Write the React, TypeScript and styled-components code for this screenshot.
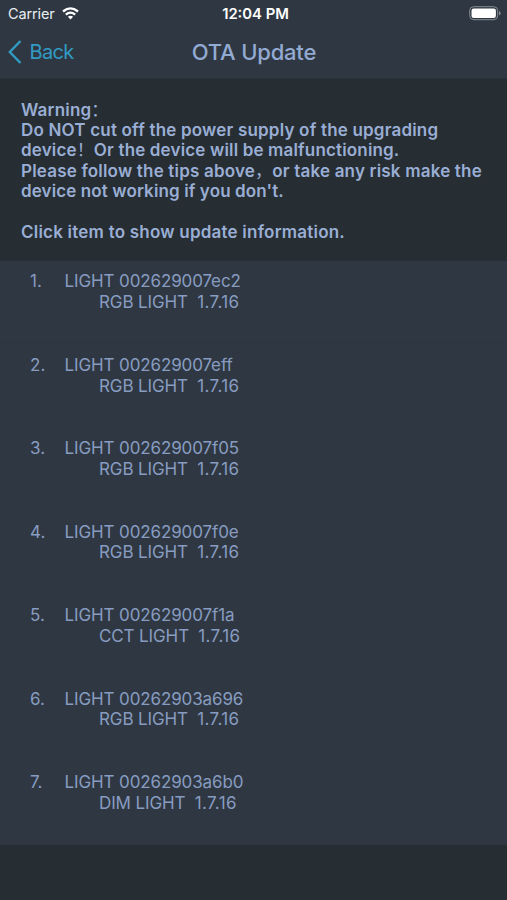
import React from 'react';
import styled, { createGlobalStyle } from 'styled-components';

const Global = createGlobalStyle`
  * { box-sizing: border-box; }
  body { margin: 0; background: #262d33; font-family: Inter, "Noto Sans CJK SC", sans-serif; }
`;

const Screen = styled.main`
  display: flex;
  flex-direction: column;
  width: 507px;
  height: 900px;
  overflow: hidden;
  background: #262d33;
  color: #9aaed4;
`;

const Header = styled.header`
  height: 79px;
  background: #2f3842;
  border-bottom: 1px solid #29313a;
`;

const StatusBar = styled.div`
  display: grid;
  grid-template-columns: 1fr auto 1fr;
  align-items: center;
  height: 27px;
  padding: 0 6px 0 8px;
  color: #fff;
  font-size: 15px;
`;

const Carrier = styled.div`
  display: flex;
  align-items: center;
  gap: 7px;
  color: #e9edf2;
  font-size: 14.5px;
  letter-spacing: -0.12px;
`;

const Clock = styled.div`
  padding: 1px 0 0 2px;
  font-size: 14.8px;
  font-weight: 600;
`;

const Battery = styled.svg`
  justify-self: end;
`;

const NavBar = styled.nav`
  display: grid;
  grid-template-columns: 1fr auto 1fr;
  align-items: center;
  height: 50px;
  padding: 0 8px;
`;

const BackButton = styled.a`
  display: flex;
  align-items: center;
  gap: 7.5px;
  color: #319bc4;
  font-size: 20px;
  letter-spacing: -0.65px;
`;

const Title = styled.h1`
  margin: 0;
  padding-left: 1px;
  color: #93aad2;
  font-size: 22px;
  font-weight: 500;
  letter-spacing: -0.2px;
`;

const Warning = styled.section`
  height: 182px;
  padding: 20.5px 21px 0;
  font-size: 17px;
  font-weight: 600;
  line-height: 20.4px;
`;

const Line = styled.div<{ $spacing?: number }>`
  height: 20.4px;
  white-space: pre;
  letter-spacing: ${p => p.$spacing ?? 0.19}px;
`;

const Mark = styled.span`
  font-weight: 400;
`;

const List = styled.ol`
  margin: 0;
  padding: 0;
  list-style: none;
`;

const Item = styled.li`
  display: grid;
  grid-template-columns: 34.5px 1fr;
  height: 83.45px;
  padding: 10.4px 0 0 30px;
  background: #2f3842;
  border-bottom: 1px solid #2d3640;
  color: #889cc1;
  font-size: 17px;
  line-height: 20.7px;
`;

const Details = styled.div`
  white-space: pre;
  letter-spacing: -0.12px;
`;

const Model = styled.div`
  padding-left: 34.5px;
`;

const Version = styled.span`
  letter-spacing: 0.36px;
`;

const devices = [
  ['002629007ec2', 'RGB'], ['002629007eff', 'RGB'], ['002629007f05', 'RGB'],
  ['002629007f0e', 'RGB'], ['002629007f1a', 'CCT'], ['00262903a696', 'RGB'],
  ['00262903a6b0', 'DIM'],
];

export default function App() {
  return (
    <Screen>
      <Global />
      <Header>
        <StatusBar>
          <Carrier>
            Carrier
            <svg width="17" height="13" viewBox="0 0 17 13" fill="none" stroke="#fff" strokeWidth="2.3">
              <path d="M1 4.5Q8.5-1.8 16 4.5M3.8 7.6Q8.5 3.6 13.2 7.6" />
              <path d="M5.9 9.7Q8.5 7.7 11.1 9.7L8.5 12.4Z" fill="#fff" stroke="none" />
            </svg>
          </Carrier>
          <Clock>12:04 PM</Clock>
          <Battery width="32" height="15" viewBox="0 0 32 15">
            <rect x=".7" y=".7" width="28" height="13" rx="4" fill="none" stroke="#878c93" />
            <rect x="2.5" y="2.5" width="24.4" height="9.4" rx="2.2" fill="#fff" />
            <path d="M30 5v4.5Q31.6 8.8 31.6 7.2T30 5" fill="#878c93" />
          </Battery>
        </StatusBar>
        <NavBar>
          <BackButton>
            <svg width="14" height="24" viewBox="0 0 14 24" fill="none" stroke="currentColor" strokeWidth="2.4">
              <path d="M12.5 1L1.8 12L12.5 23" />
            </svg>
            Back
          </BackButton>
          <Title>OTA Update</Title>
        </NavBar>
      </Header>
      <Warning>
        <Line>Warning<Mark>：</Mark></Line>
        <Line>Do NOT cut off the power supply of the upgrading</Line>
        <Line $spacing={0.16}>device<Mark>！</Mark>Or the device will be malfunctioning.</Line>
        <Line>Please follow the tips above<Mark>，</Mark>or take any risk make the</Line>
        <Line $spacing={0.12}>device not working if you don't.</Line>
        <Line />
        <Line $spacing={0.22}>Click item to show update information.</Line>
      </Warning>
      <List>
        {devices.map(([id, kind], i) => (
          <Item key={id}>
            <span>{i + 1}.</span>
            <Details>
              <div>LIGHT {id}</div>
              <Model>{kind} LIGHT  <Version>1.7.16</Version></Model>
            </Details>
          </Item>
        ))}
      </List>
    </Screen>
  );
}
